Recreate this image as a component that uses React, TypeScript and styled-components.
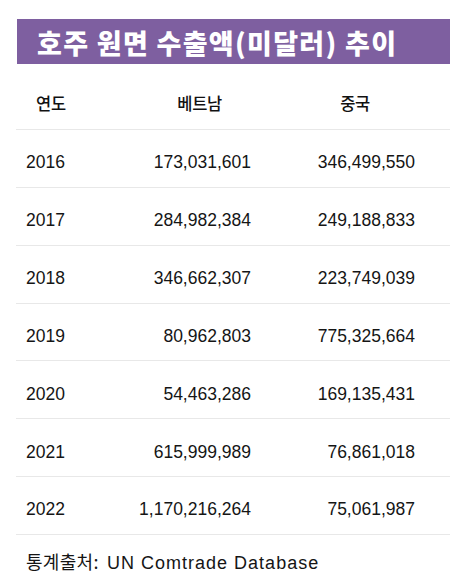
import styled, { createGlobalStyle } from "styled-components";

type Row = { year: string; vietnam: string; china: string };

const rows: Row[] = [
  { year: "2016", vietnam: "173,031,601", china: "346,499,550" },
  { year: "2017", vietnam: "284,982,384", china: "249,188,833" },
  { year: "2018", vietnam: "346,662,307", china: "223,749,039" },
  { year: "2019", vietnam: "80,962,803", china: "775,325,664" },
  { year: "2020", vietnam: "54,463,286", china: "169,135,431" },
  { year: "2021", vietnam: "615,999,989", china: "76,861,018" },
  { year: "2022", vietnam: "1,170,216,264", china: "75,061,987" },
];

const App = () => {
  return (
    <>
      <GlobalStyle />
      <Page>
        <TitleBar>호주 원면 수출액(미달러) 추이</TitleBar>
        <Table>
          <HeaderRow>
            <HeadCell $pad="0 0 0 10px">연도</HeadCell>
            <HeadCell $align="end" $pad="0 29px 0 0">베트남</HeadCell>
            <HeadCell $align="end" $pad="0 45px 0 0">중국</HeadCell>
          </HeaderRow>
          {rows.map((r) => (
            <DataRow key={r.year}>
              <Cell>{r.year}</Cell>
              <Cell $align="end">{r.vietnam}</Cell>
              <Cell $align="end">{r.china}</Cell>
            </DataRow>
          ))}
        </Table>
        <Source>
          통계출처: <Latin>UN Comtrade Database</Latin>
        </Source>
      </Page>
    </>
  );
};

const GlobalStyle = createGlobalStyle`
  body {
    margin: 0;
    background: #ffffff;
    font-family: "Liberation Sans", "Noto Sans CJK KR", sans-serif;
    color: #111111;
    overflow: hidden;
  }
`;

const Page = styled.div`
  width: 450px;
  height: 585px;
  padding-left: 16px;
  box-sizing: border-box;
`;

const TitleBar = styled.div`
  margin: 19px 0 0 1px;
  height: 45px;
  background: #7e5fa0;
  color: #ffffff;
  font-family: "Noto Sans CJK KR", sans-serif;
  font-weight: 900;
  font-size: 27px;
  letter-spacing: 1.3px;
  display: flex;
  align-items: center;
  padding-left: 20px;
  padding-top: 2px;
  box-sizing: border-box;
  white-space: nowrap;
  overflow: hidden;
`;

const Table = styled.div`
  margin-top: 12px;
  display: flex;
  flex-direction: column;
  width: 100%;
`;

const RowBase = styled.div`
  display: grid;
  grid-template-columns: 110px 115px 164px 1fr;
  width: 100%;
  padding-left: 10px;
  align-items: center;
  border-bottom: 1px solid #e8e8e8;
  box-sizing: border-box;
`;

const HeaderRow = styled(RowBase)`
  height: 54px;
`;

const DataRow = styled(RowBase)`
  height: 57.85px;
  padding-top: 9px;
`;

const HeadCell = styled.div<{ $align?: string; $pad?: string }>`
  justify-self: ${(p) => p.$align || "start"};
  padding: ${(p) => p.$pad || "0"};
  font-family: "Noto Sans CJK KR", sans-serif;
  font-weight: 500;
  font-size: 16.5px;
  letter-spacing: -0.3px;
`;

const Cell = styled.div<{ $align?: string }>`
  justify-self: ${(p) => p.$align || "start"};
  font-size: 17.5px;
  color: #151515;
`;

const Source = styled.div`
  padding: 13px 0 0 10px;
  font-family: "Noto Sans CJK KR", sans-serif;
  font-size: 18px;
  letter-spacing: 0.3px;
  word-spacing: 4px;
  color: #151515;
  white-space: nowrap;
`;

const Latin = styled.span`
  font-family: "Liberation Sans", sans-serif;
  font-size: 18px;
  letter-spacing: 1px;
  word-spacing: 0;
`;

export default App;
